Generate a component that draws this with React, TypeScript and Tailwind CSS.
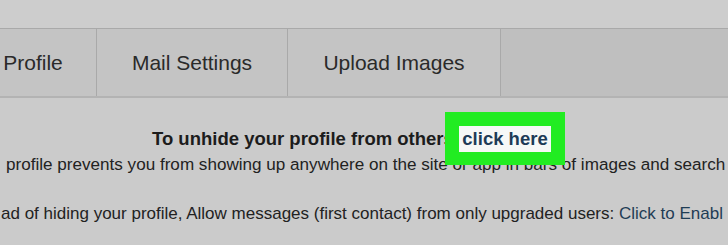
export default function App() {
  const tabs = [
    { name: "Profile", width: "w-[127px] -ml-[30px]" },
    { name: "Mail Settings", width: "w-[191px]" },
    { name: "Upload Images", width: "w-[213px]" },
  ]

  return (
    <div className="relative w-[728px] h-[245px] overflow-hidden bg-[#cbcbcb] text-[#222] font-['Liberation_Sans',Arial,sans-serif]">
      {/* Top strip */}
      <div className="h-[29px] bg-[#cdcdcd] border-b border-[#a9a9a9]" />

      {/* Tabs */}
      <div className="flex h-[69px] bg-[#bfbfbf] border-b-2 border-[#b3b3b3]">
        {tabs.map((tab) => (
          <div
            key={tab.name}
            className={`${tab.width} shrink-0 flex items-center justify-center bg-[#c4c4c4] border-r border-[#a9a9a9] text-[21px] text-[#2a2a2a]`}
          >
            {tab.name}
          </div>
        ))}
        <div className="flex-1" />
      </div>

      {/* Body */}
      <div className="whitespace-nowrap">
        <p className="mt-[30px] pl-[152px] text-[18.5px] leading-[22px] font-bold text-[#1c1c1c]">
          To unhide your profile from others:
        </p>
        <p className="mt-[2px] pl-[6px] text-[17.1px] leading-[26px]">
          profile prevents you from showing up anywhere on the site or app in bars of images and search
        </p>
        <p className="mt-[23px] pl-[1px] text-[17px] leading-[26px]">
          ad of hiding your profile, Allow messages (first contact) from only upgraded users:{" "}
          <span className="text-[#1f3d55]">Click to Enabl</span>
        </p>
      </div>

      {/* Highlight overlay */}
      <div className="absolute left-[445px] top-[112px] w-[120px] h-[53px] bg-[#22ec22] flex items-center justify-center">
        <div className="w-[92px] h-[26px] bg-[#f6f8f7] flex items-center justify-center text-[18.5px] font-bold text-[#1d3b57]">
          click here
        </div>
      </div>
    </div>
  )
}
